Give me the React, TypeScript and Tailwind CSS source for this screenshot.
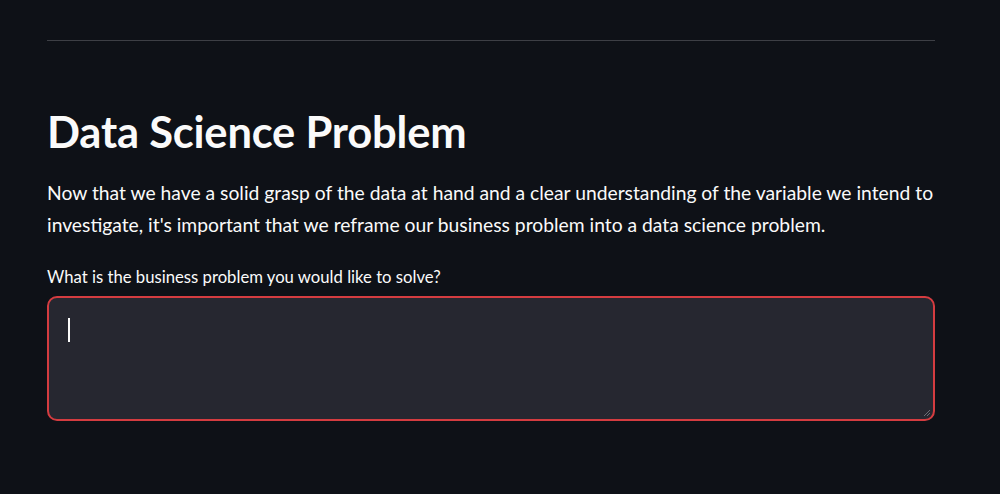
import { type FC } from "react";

const App: FC = () => {
  return (
    <div
      className="min-h-[494px] w-full bg-[#0e1117] text-[#fafafa]"
      style={{ fontFamily: '"Lato", "Noto Sans", sans-serif' }}
    >
      <div className="pl-[47px] pr-[65px] pt-[40px]">
        <hr className="border-0 border-t border-[#3d3f45]" />

        <h2 className="mt-[60px] text-[43.5px] font-bold leading-[60px] tracking-[-0.2px]">
          Data Science Problem
        </h2>

        <p className="mt-[16px] text-[19.3px] leading-[32px]">
          Now that we have a solid grasp of the data at hand and a clear understanding of the variable we intend to
          investigate, it's important that we reframe our business problem into a data science problem.
        </p>

        <label className="block mt-[25px] text-[16.7px] leading-[22px]">
          What is the business problem you would like to solve?
        </label>

        <div className="relative mt-[8px] h-[125px] rounded-[10px] border-2 border-[#d43c40] bg-[#262730]">
          <div className="absolute left-[19px] top-[20px] h-[24px] w-[2px] bg-[#fafafa]" />
          <svg
            className="absolute bottom-[2px] right-[2px]"
            width="8"
            height="8"
            viewBox="0 0 8 8"
          >
            <path d="M1 7L7 1M4 7L7 4" stroke="#6b6d75" strokeWidth="1" />
          </svg>
        </div>
      </div>
    </div>
  );
};

export default App;
